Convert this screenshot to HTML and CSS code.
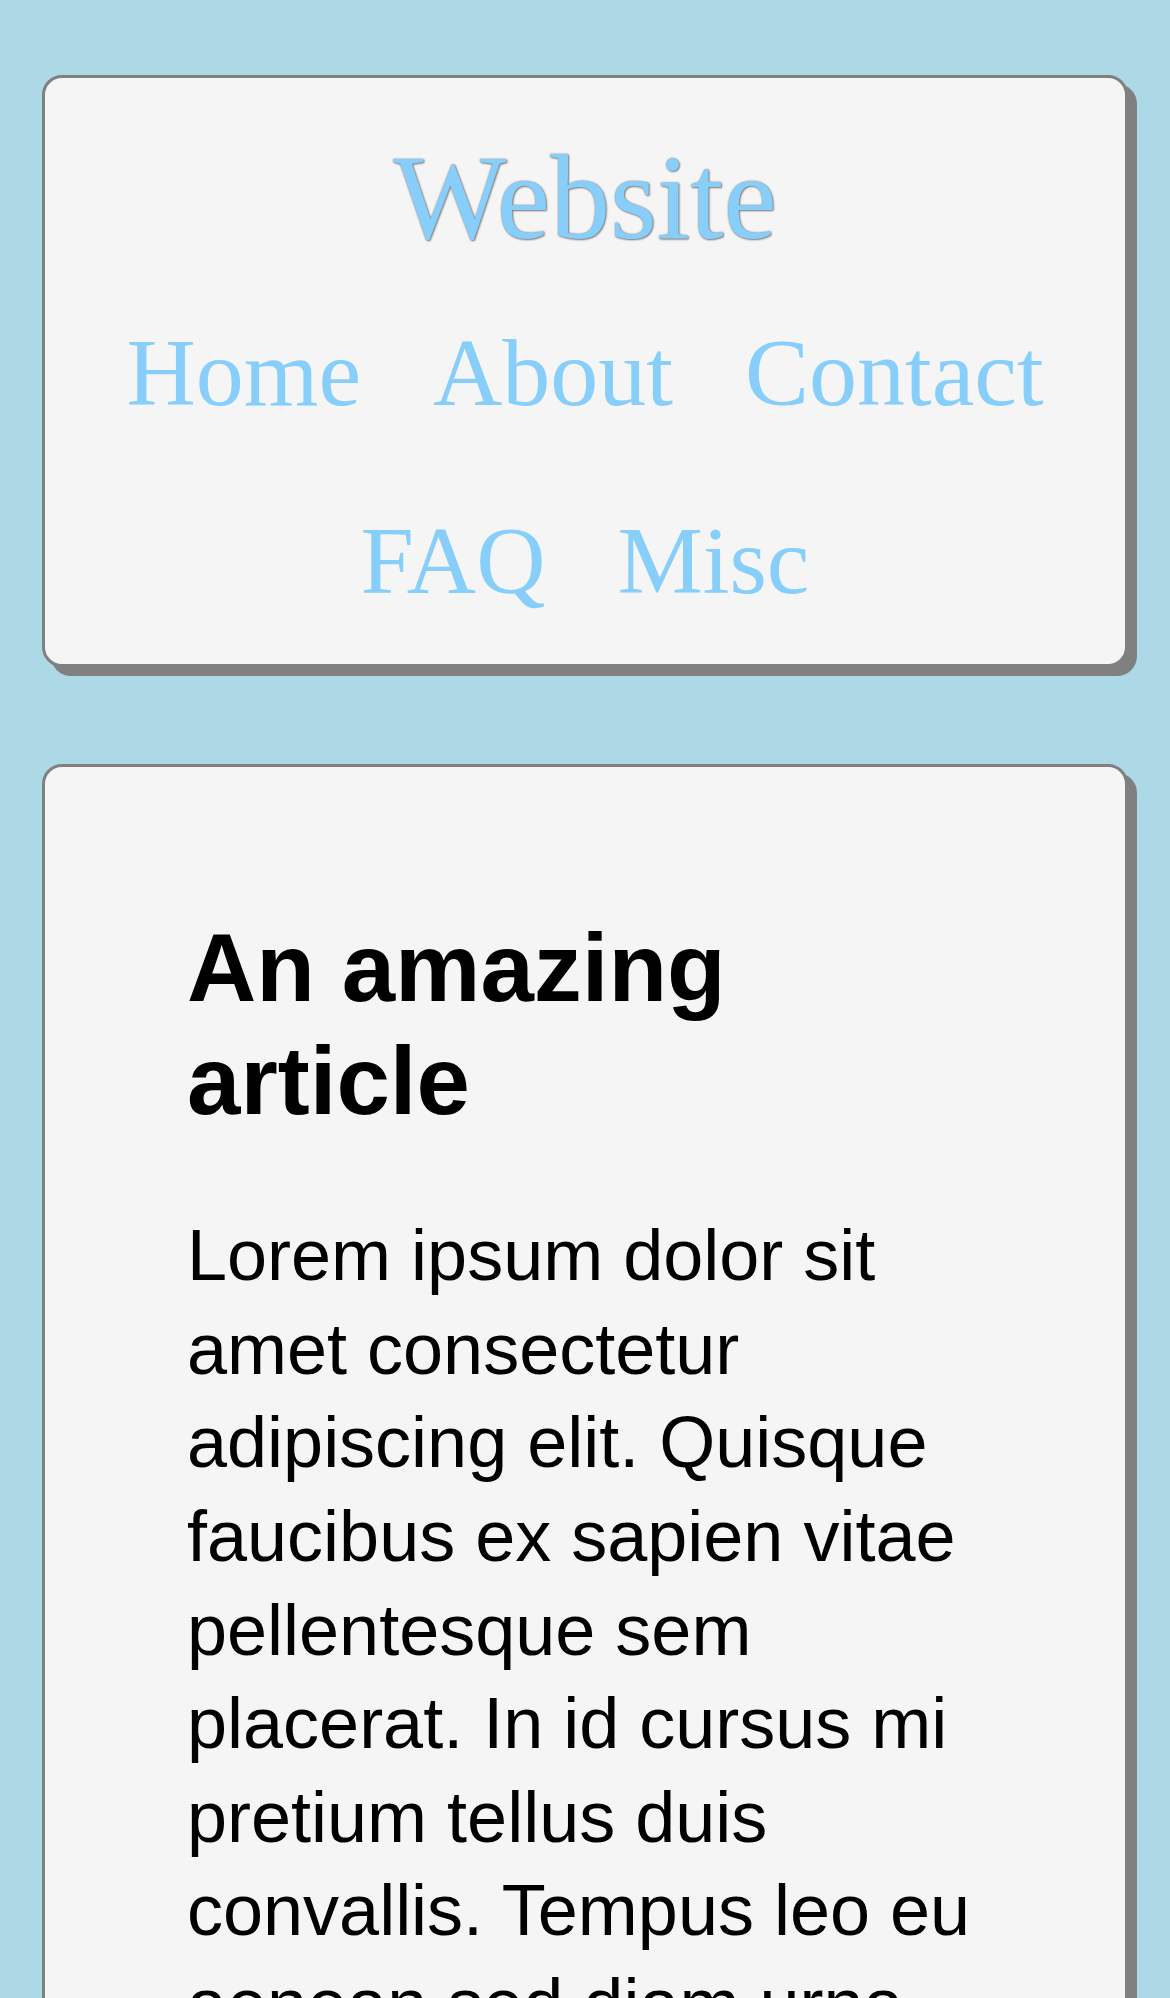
FILE: index.html
```html
<!DOCTYPE html>
<html lang="en">
<head>
<meta charset="utf-8">
<title>Website</title>
<link rel="stylesheet" href="styles.css">
</head>
<body>
<header class="card site-header">
  <h1 class="site-title">Website</h1>
  <nav class="site-nav">
    <a href="#">Home</a>
    <a href="#">About</a>
    <a href="#">Contact</a>
    <a href="#">FAQ</a>
    <a href="#">Misc</a>
  </nav>
</header>
<main class="card article-card">
  <article>
    <h2 class="article-title">An amazing article</h2>
    <p class="article-text">Lorem ipsum dolor sit amet consectetur adipiscing elit. Quisque faucibus ex sapien vitae pellentesque sem placerat. In id cursus mi pretium tellus duis convallis. Tempus leo eu aenean sed diam urna tempor. Pulvinar vivamus fringilla lacus nec metus bibendum egestas. Iaculis massa nisl malesuada lacinia integer nunc posuere. Ut hendrerit semper vel class aptent taciti sociosqu. Ad litora torquent per conubia nostra inceptos himenaeos.</p>
  </article>
</main>
</body>
</html>
```
FILE: styles.css
```css
html, body {
  margin: 0;
}

body {
  background: #add8e6;
  padding: 75px 42px 0 42px;
}

.card {
  background: #f5f5f5;
  border: 3px solid #808080;
  border-radius: 20px;
  box-shadow: 9px 9px 0 #808080;
}

.site-header {
  padding: 51px 20px 48px;
  text-align: center;
}

.site-title {
  margin: 0;
  font-family: "Liberation Serif", "Times New Roman", serif;
  font-weight: 400;
  font-size: 120px;
  line-height: normal;
  color: #87cefa;
  text-shadow: 1px 1px 2px #808080, 0 0 2px #808080;
}

.site-nav {
  margin-top: 50px;
  display: flex;
  flex-wrap: wrap;
  justify-content: center;
  column-gap: 72px;
  row-gap: 76.7px;
}

.site-nav a {
  font-family: "Liberation Serif", "Times New Roman", serif;
  font-size: 96px;
  line-height: normal;
  color: #87cefa;
  text-decoration: none;
}

.article-card {
  margin-top: 97px;
  padding: 144px 140px 144px 142px;
  font-family: "Liberation Sans", Arial, sans-serif;
  color: #000;
}

.article-title {
  margin: 0;
  font-size: 96px;
  font-weight: 700;
  line-height: 1.18;
}

.article-text {
  margin: 72px 0 0;
  font-size: 72px;
  line-height: 1.3;
}
```
